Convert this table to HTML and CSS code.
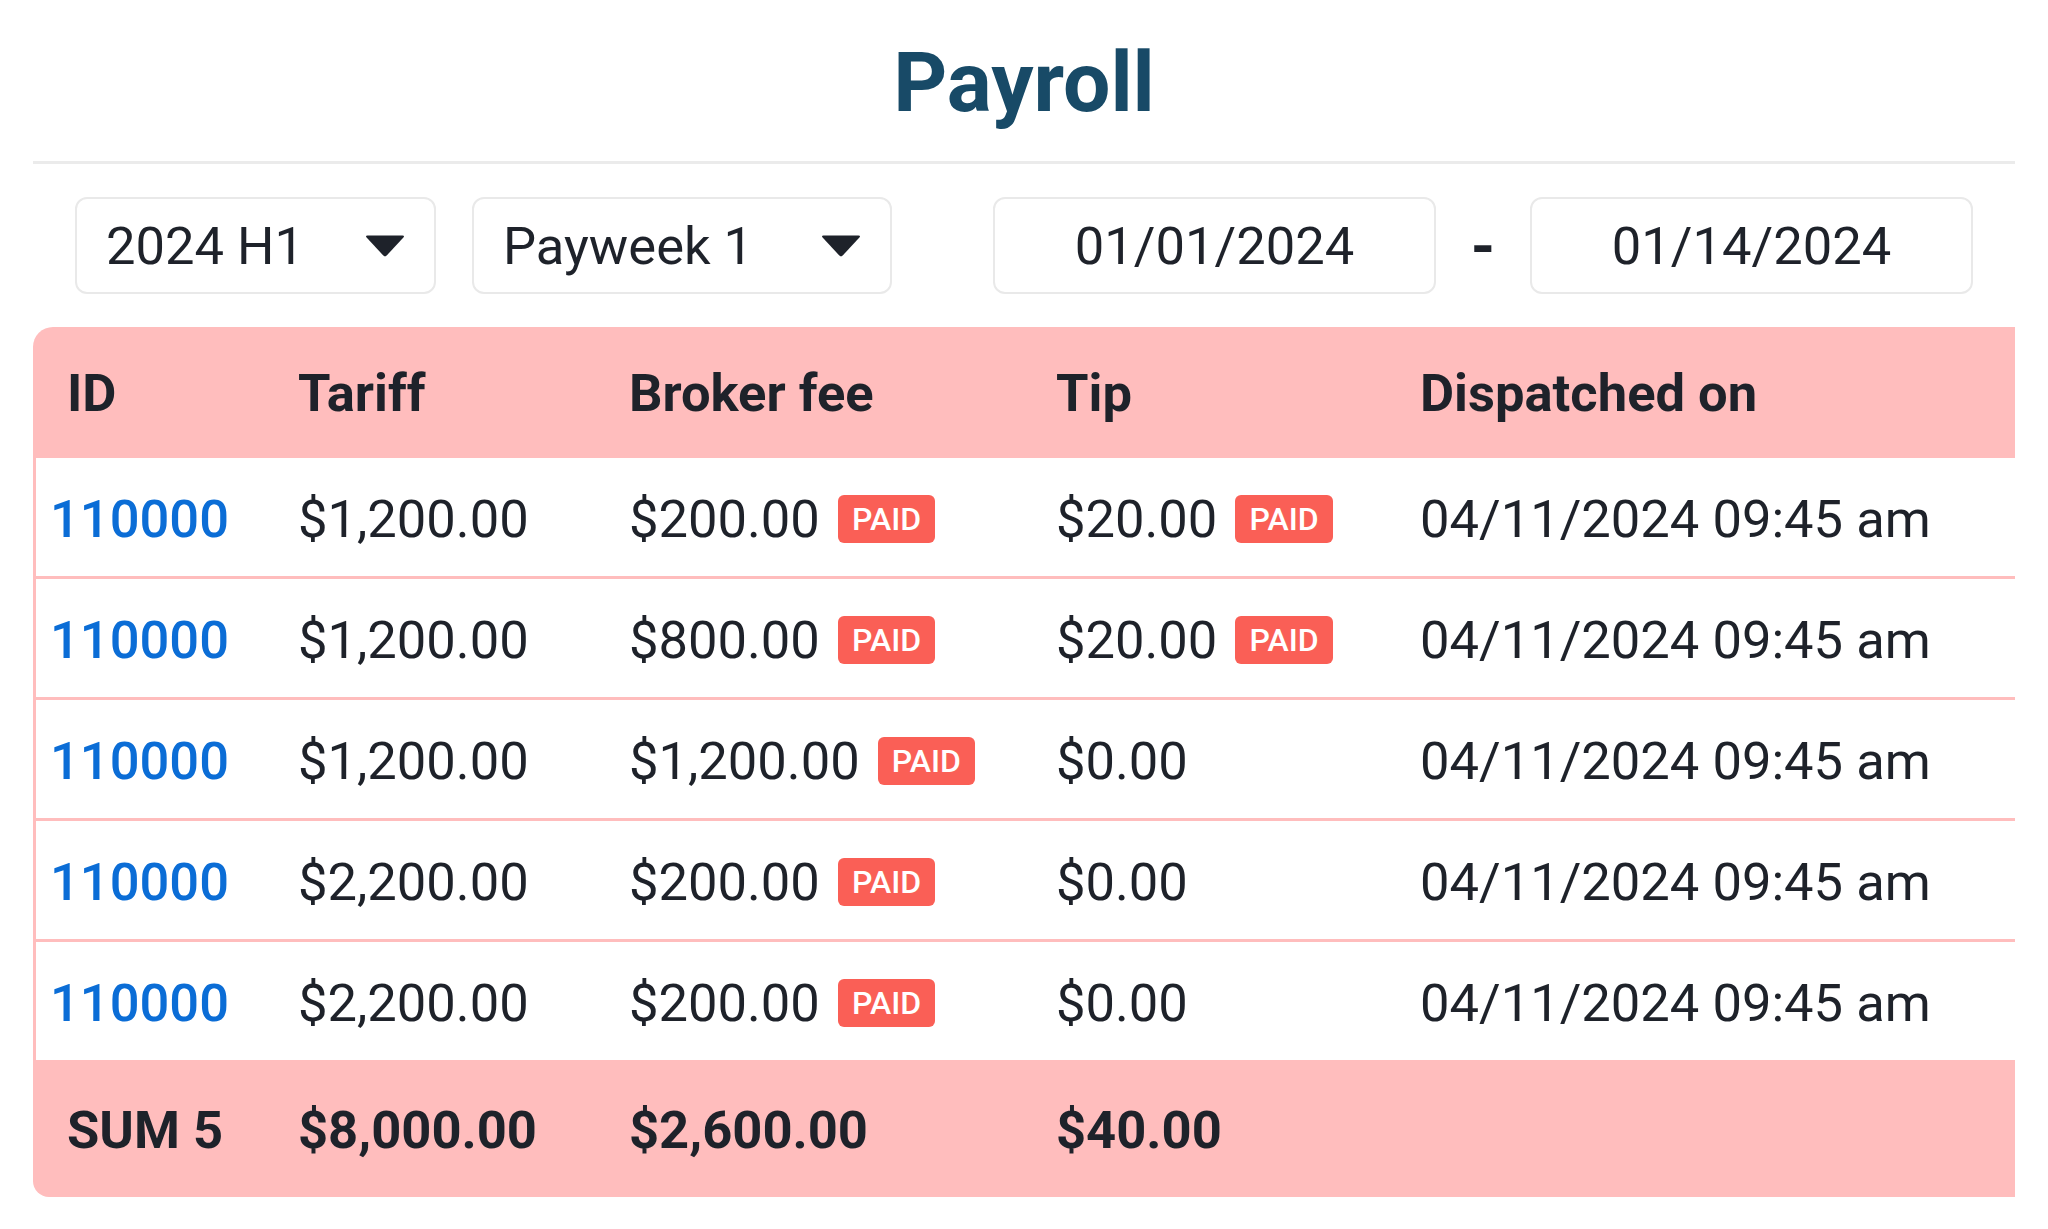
FILE: index.html
```html
<!DOCTYPE html>
<html lang="en">
<head>
<meta charset="utf-8">
<title>Payroll</title>
<link rel="stylesheet" href="styles.css">
</head>
<body>
<div class="page">
  <h1 class="title">Payroll</h1>
  <div class="rule"></div>

  <div class="filters">
    <div class="select select-half">
      <span>2024 H1</span>
      <svg class="caret" viewBox="0 0 40 22" width="40" height="22" aria-hidden="true"><path d="M2.5 0.5 H37.5 Q40 0.5 38.4 2.6 L21.7 20.6 Q20 22.2 18.3 20.6 L1.6 2.6 Q0 0.5 2.5 0.5 Z"/></svg>
    </div>
    <div class="select select-week">
      <span>Payweek 1</span>
      <svg class="caret" viewBox="0 0 40 22" width="40" height="22" aria-hidden="true"><path d="M2.5 0.5 H37.5 Q40 0.5 38.4 2.6 L21.7 20.6 Q20 22.2 18.3 20.6 L1.6 2.6 Q0 0.5 2.5 0.5 Z"/></svg>
    </div>
    <div class="dates">
      <div class="date">01/01/2024</div>
      <span class="dash">-</span>
      <div class="date">01/14/2024</div>
    </div>
  </div>

  <div class="table-wrap">
    <table class="payroll">
      <colgroup>
        <col class="c-id"><col class="c-tariff"><col class="c-broker"><col class="c-tip"><col class="c-date">
      </colgroup>
      <thead>
        <tr><th>ID</th><th>Tariff</th><th>Broker fee</th><th>Tip</th><th>Dispatched on</th></tr>
      </thead>
      <tbody>
        <tr>
          <td><div class="cell"><a class="id-link" href="#">110000</a></div></td>
          <td><div class="cell">$1,200.00</div></td>
          <td><div class="cell">$200.00<span class="badge">PAID</span></div></td>
          <td><div class="cell">$20.00<span class="badge">PAID</span></div></td>
          <td><div class="cell">04/11/2024 09:45 am</div></td>
        </tr>
        <tr>
          <td><div class="cell"><a class="id-link" href="#">110000</a></div></td>
          <td><div class="cell">$1,200.00</div></td>
          <td><div class="cell">$800.00<span class="badge">PAID</span></div></td>
          <td><div class="cell">$20.00<span class="badge">PAID</span></div></td>
          <td><div class="cell">04/11/2024 09:45 am</div></td>
        </tr>
        <tr>
          <td><div class="cell"><a class="id-link" href="#">110000</a></div></td>
          <td><div class="cell">$1,200.00</div></td>
          <td><div class="cell">$1,200.00<span class="badge">PAID</span></div></td>
          <td><div class="cell">$0.00</div></td>
          <td><div class="cell">04/11/2024 09:45 am</div></td>
        </tr>
        <tr>
          <td><div class="cell"><a class="id-link" href="#">110000</a></div></td>
          <td><div class="cell">$2,200.00</div></td>
          <td><div class="cell">$200.00<span class="badge">PAID</span></div></td>
          <td><div class="cell">$0.00</div></td>
          <td><div class="cell">04/11/2024 09:45 am</div></td>
        </tr>
        <tr>
          <td><div class="cell"><a class="id-link" href="#">110000</a></div></td>
          <td><div class="cell">$2,200.00</div></td>
          <td><div class="cell">$200.00<span class="badge">PAID</span></div></td>
          <td><div class="cell">$0.00</div></td>
          <td><div class="cell">04/11/2024 09:45 am</div></td>
        </tr>
      </tbody>
      <tfoot>
        <tr><td>SUM 5</td><td>$8,000.00</td><td>$2,600.00</td><td>$40.00</td><td></td></tr>
      </tfoot>
    </table>
  </div>
</div>
</body>
</html>
```

FILE: styles.css
```css
* { box-sizing: border-box; }

html, body {
  margin: 0;
  padding: 0;
  background: #ffffff;
}

body {
  font-family: Roboto, "Liberation Sans", Arial, sans-serif;
  color: #1e222a;
}

.page {
  width: 2048px;
  padding: 0 33px;
}

.title {
  margin: 41px 0 0;
  font-size: 84px;
  line-height: 84px;
  font-weight: 700;
  text-align: center;
  color: #184a67;
}

.rule {
  height: 3px;
  margin-top: 36px;
  background: #ebebeb;
}

.filters {
  display: flex;
  align-items: center;
  margin-top: 33px;
  padding: 0 42px;
}

.select,
.date {
  height: 97px;
  border: 2px solid #e9e9e9;
  border-radius: 12px;
  background: #fff;
  font-size: 52.5px;
  color: #1e222a;
}

.select {
  display: flex;
  align-items: center;
  justify-content: space-between;
  padding: 0 29px 0 29px;
}

.select-half { width: 361px; }
.select-week { width: 420px; margin-left: 36px; }

.caret { fill: #1e222a; display: block; }

.dates {
  display: flex;
  align-items: center;
  margin-left: auto;
}

.date {
  width: 443px;
  display: flex;
  align-items: center;
  justify-content: center;
}

.dash {
  width: 94px;
  text-align: center;
  font-size: 62px;
  font-weight: 700;
  line-height: 1;
  color: #1e222a;
}

.table-wrap {
  margin-top: 33px;
  border-radius: 20px 0 0 16px;
  overflow: hidden;
}

.payroll {
  width: 100%;
  table-layout: fixed;
  border-collapse: separate;
  border-spacing: 0;
  font-size: 52.5px;
}

.c-id { width: 265px; }
.c-tariff { width: 331px; }
.c-broker { width: 427px; }
.c-tip { width: 364px; }
.c-date { width: 595px; }

.payroll th {
  height: 131px;
  padding: 0;
  text-align: left;
  vertical-align: middle;
  font-weight: 700;
  background: #ffbdbd;
  color: #1e222a;
  white-space: nowrap;
}

.payroll th:first-child,
.payroll tfoot td:first-child {
  padding-left: 34px;
}

.payroll tbody td {
  padding: 0;
  border-bottom: 3px solid #ffbdbd;
  background: #fff;
}

.payroll tbody td:first-child {
  border-left: 3px solid #ffbdbd;
  padding-left: 14px;
}

.cell {
  height: 118px;
  padding-top: 4px;
  display: flex;
  align-items: center;
  white-space: nowrap;
}

.id-link {
  color: #0b6dd6;
  font-weight: 500;
  text-decoration: none;
}

.badge {
  display: inline-block;
  height: 48px;
  line-height: 48px;
  margin-left: 18px;
  padding: 0 14px;
  border-radius: 6px;
  background: #fa5f56;
  color: #ffffff;
  font-size: 32px;
  font-weight: 500;
}

.payroll tfoot td {
  height: 134px;
  padding: 0;
  vertical-align: middle;
  background: #ffbdbd;
  font-weight: 700;
  white-space: nowrap;
}
```
